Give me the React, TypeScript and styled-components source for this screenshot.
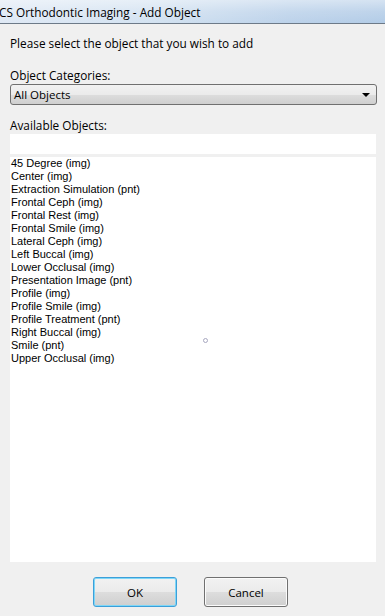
import React from "react";
import styled, { createGlobalStyle } from "styled-components";

const Global = createGlobalStyle`
  html, body { margin: 0; padding: 0; background: #f0f0f0; }
  #root { width: 385px; height: 616px; overflow: hidden; }
`;

const Window = styled.div`
  width: 385px;
  height: 616px;
  display: flex;
  flex-direction: column;
  background: #f0f0f0;
  font-family: "Open Sans", "Noto Sans", "Liberation Sans", sans-serif;
  color: #000;
`;

const TitleBar = styled.div`
  height: 23px;
  border-bottom: 1px solid #6d7a88;
  display: flex;
  align-items: center;
  background:
    linear-gradient(180deg, rgba(255,255,255,0.45) 0%, rgba(255,255,255,0.15) 50%, rgba(255,255,255,0) 100%),
    linear-gradient(90deg, #dfe9f5 0%, #d3e2f1 40%, #bcd2ea 75%, #b3cce7 100%);
`;

const TitleText = styled.span`
  font-family: "Open Sans", "Noto Sans", sans-serif;
  font-size: 11.8px;
  color: #000;
  margin-left: -1px;
  white-space: nowrap;
`;

const Body = styled.div`
  flex: 1;
  display: flex;
  flex-direction: column;
  padding: 0 9px 0 10px;
`;

const Label = styled.div<{ $top: number }>`
  font-size: 11.8px;
  line-height: 15px;
  height: 15px;
  margin-top: ${(p) => p.$top}px;
  white-space: nowrap;
`;

const Combo = styled.div`
  margin-top: 1px;
  height: 19px;
  border: 1px solid #707070;
  border-radius: 3px;
  display: flex;
  align-items: center;
  justify-content: space-between;
  padding: 0 6px 0 3px;
  box-sizing: content-box;
  width: 356px;
  background: linear-gradient(180deg, #f2f2f2 0%, #ebebeb 50%, #dddddd 51%, #cfcfcf 100%);
  font-size: 11.5px;
`;

const Arrow = styled.span`
  width: 0;
  height: 0;
  border-left: 4px solid transparent;
  border-right: 4px solid transparent;
  border-top: 4px solid #000;
  margin-top: 1px;
`;

const TextBox = styled.div`
  margin-top: 1px;
  height: 20px;
  background: #fff;
`;

const List = styled.div`
  position: relative;
  margin-top: 3px;
  height: 405px;
  background: #fff;
  padding: 0 0 0 1px;
  box-sizing: border-box;
  font-family: "Liberation Sans", Arial, sans-serif;
  font-size: 11px;
`;

const Item = styled.div`
  height: 13px;
  line-height: 13px;
  white-space: nowrap;
`;

const Busy = styled.span`
  position: absolute;
  left: 193px;
  top: 181px;
  width: 3px;
  height: 3px;
  border: 1px solid #a8a8c0;
  border-radius: 50%;
`;

const Buttons = styled.div`
  display: flex;
  gap: 27px;
  padding-left: 83px;
  margin-top: 15px;
`;

const Button = styled.div<{ $default?: boolean }>`
  width: 84px;
  height: 30px;
  box-sizing: border-box;
  border: 1px solid ${(p) => (p.$default ? "#3c9fd9" : "#707070")};
  box-shadow: ${(p) => (p.$default ? "inset 0 0 0 1px #7fd7f7" : "inset 0 0 0 1px #fbfbfb")};
  border-radius: 3px;
  display: flex;
  align-items: center;
  justify-content: center;
  font-size: 11.5px;
  background: linear-gradient(180deg, #f2f2f2 0%, #ebebeb 50%, #dddddd 51%, #cfcfcf 100%);
`;

const items = [
  "45 Degree (img)",
  "Center (img)",
  "Extraction Simulation (pnt)",
  "Frontal Ceph (img)",
  "Frontal Rest (img)",
  "Frontal Smile (img)",
  "Lateral Ceph (img)",
  "Left Buccal (img)",
  "Lower Occlusal (img)",
  "Presentation Image (pnt)",
  "Profile (img)",
  "Profile Smile (img)",
  "Profile Treatment (pnt)",
  "Right Buccal (img)",
  "Smile (pnt)",
  "Upper Occlusal (img)",
];

export default function App() {
  return (
    <>
      <Global />
      <Window>
        <TitleBar>
          <TitleText>CS Orthodontic Imaging - Add Object</TitleText>
        </TitleBar>
        <Body>
          <Label $top={12}>Please select the object that you wish to add</Label>
          <Label $top={17}>Object Categories:</Label>
          <Combo>
            <span>All Objects</span>
            <Arrow />
          </Combo>
          <Label $top={13}>Available Objects:</Label>
          <TextBox />
          <List>
            {items.map((t) => (
              <Item key={t}>{t}</Item>
            ))}
            <Busy />
          </List>
          <Buttons>
            <Button $default>OK</Button>
            <Button>Cancel</Button>
          </Buttons>
        </Body>
      </Window>
    </>
  );
}
